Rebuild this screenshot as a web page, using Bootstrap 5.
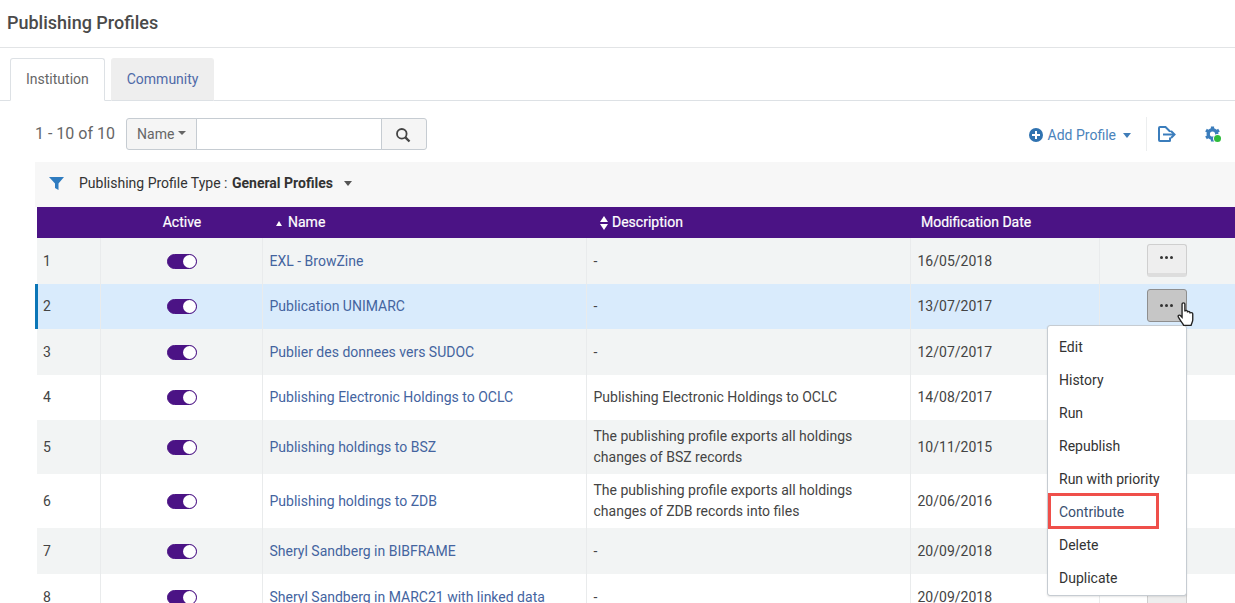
<!DOCTYPE html>
<html lang="en">
<head>
    <meta charset="UTF-8">
    <meta name="viewport" content="width=device-width, initial-scale=1.0">
    <title>Publishing Profiles</title>
    <link href="https://cdn.jsdelivr.net/npm/bootstrap@5.3.0/dist/css/bootstrap.min.css" rel="stylesheet">
    <style>
        html, body { height: 603px; overflow: hidden; }
        body { font-family: Roboto, "Liberation Sans", sans-serif; font-size: 14px; color: #3a3a3a; background: #fff; }
        a { text-decoration: none; color: #44649f; }
        .page-head { height: 48px; padding: 0 7px; border-bottom: 1px solid #e2e4e6; font-size: 18px; font-weight: 500; color: #4a4a4a; line-height: 46px; }
        .profile-tabs { padding: 10px 0 0 10px; height: 53px; border-bottom: 1px solid #dde1e5; gap: 6px; }
        .profile-tabs .nav-link { height: 43px; padding: 0 15px; line-height: 41px; font-size: 14px; border-radius: 3px 3px 0 0; margin-bottom: -1px; }
        .profile-tabs .nav-link.active { color: #666; border-color: #dde1e5 #dde1e5 #fff; }
        .profile-tabs .nav-link.other { background: #eeeeee; color: #4f6aa8; border-color: #eeeeee; border-bottom-color: #dde1e5; }
        .tool-row { height: 61px; padding: 17px 0 12px 35px; }
        .range-text { font-size: 16px; color: #666; width: 91px; }
        .search-group { width: 301px; height: 32px; }
        .search-group .btn, .search-group .form-control { height: 32px; border-color: #c6ccd2; font-size: 14px; border-radius: 3px; }
        .search-group .btn { background: #f5f5f5; color: #666; }
        .name-btn { width: 71px; padding: 0; }
        .search-btn { width: 46px; padding: 0 2px 0 0; }
        .add-link { color: #4a83bb; font-size: 14px; display: flex; align-items: center; gap: 5px; margin-top: 2px; }
        .tool-caret { width: 0; height: 0; border-left: 4.5px solid transparent; border-right: 4.5px solid transparent; border-top: 5px solid #3f7cb8; margin-left: 2px; }
        .tool-sep { width: 1px; height: 34px; background: #eceeef; margin: 0 11px 0 15px; }
        .gear-icon { margin-left: 29px; margin-right: 14px; }
        .filter-bar { margin-left: 35px; height: 45px; background: #f7f7f7; padding: 0 0 3px 14px; gap: 14px; color: #333; }
        .filter-label b { margin-left: 1px; }
        .filter-caret { width: 0; height: 0; border-left: 4.5px solid transparent; border-right: 4.5px solid transparent; border-top: 5px solid #555; margin-left: -3px; }
        .table-wrap { margin-left: 37px; position: relative; }
        .profile-table { table-layout: fixed; width: 1198px; margin: 0; color: #444; border-collapse: collapse; }
        .profile-table th { background: #4b1385; color: #fff; height: 31px; padding: 0 0 0 6px; border: 0; font-weight: 400; font-size: 14px; vertical-align: middle; -webkit-text-stroke: .2px #fff; }
        .profile-table td { padding: 0 7px 0 6px; border: 0; border-left: 1px solid #e9ebec; vertical-align: middle; line-height: 21px; background: #fff; box-shadow: none; color: #444; }
        .profile-table td:first-child { border-left: 0; }
        .profile-table tr.stripe td { background: #f2f4f4; }
        .profile-table tr.picked td { background: #d9ebfc; }
        .profile-table tr.picked td:first-child { position: relative; }
        .profile-table tr.picked td:first-child::before { content: ""; position: absolute; left: -2px; top: 0; bottom: 0; width: 3px; background: #0b76b7; }
        .profile-table .link-cell, .profile-table .desc-cell, .profile-table .date-cell { padding-left: 7px; }
        .profile-table .action-cell { padding-bottom: 2px; }
        .active-head { padding-right: 4px !important; }
        .date-head { padding-left: 11px !important; }
        .toggle-pill { display: block; width: 30px; height: 15px; margin: 0 0 0 60px; border-radius: 8px; background: #4b1385; border: 1px solid #4b1385; position: relative; }
        .toggle-pill::after { content: ""; position: absolute; right: 0; top: 0; width: 13px; height: 13px; border-radius: 50%; background: #fff; }
        .sort-up { display: inline-block; width: 0; height: 0; border-left: 3.5px solid transparent; border-right: 3.5px solid transparent; border-bottom: 5px solid #fff; margin: 0 6px 1px 8px; }
        .sort-both { display: inline-flex; flex-direction: column; gap: 2px; vertical-align: middle; margin: 0 4px 0 8px; }
        .sort-both i { display: block; width: 0; height: 0; border-left: 4px solid transparent; border-right: 4px solid transparent; }
        .sort-both i:first-child { border-bottom: 6px solid #fff; }
        .sort-both i:last-child { border-top: 6px solid #fff; }
        .dots-btn { display: flex; align-items: center; justify-content: center; gap: 2px; width: 40px; height: 33px; margin-left: 41px; padding: 0 0 3px; background: #eeeeee; border: 1px solid #cfcfcf; border-bottom: 4px solid #dddddd; border-radius: 3px; }
        .dots-btn i { width: 3px; height: 3px; border-radius: 50%; background: #333; }
        .dots-btn.pressed { background: #c6c6c6; border: 1px solid #8e8e8e; padding: 0; }
        .row-menu { display: block; position: absolute; left: 1010px; top: 118px; width: 140px; min-width: 0; padding: 0; margin: 0; border: 1px solid #c6ccd2; border-radius: 3px; font-size: 14px; box-shadow: 0 1px 2px rgba(0,0,0,.1); z-index: 5; }
        .row-menu .dropdown-item { height: 33px; line-height: 33px; padding: 0 11px; color: #333; }
        .row-menu .dropdown-item:first-child { margin-top: 5px; }
        .row-menu .contribute-item { position: relative; color: #3a5070; }
        .row-menu .contribute-item::after { content: ""; position: absolute; left: 0; top: -3px; width: 111px; height: 36px; border: 3px solid #ef4f4a; }
        .hand-cursor { position: absolute; left: 1140px; top: 95px; z-index: 6; }
    </style>
</head>
<body>
    <div class="page-head">Publishing Profiles</div>

    <ul class="nav nav-tabs profile-tabs">
        <li class="nav-item"><a class="nav-link active" href="#">Institution</a></li>
        <li class="nav-item"><a class="nav-link other" href="#">Community</a></li>
    </ul>

    <div class="tool-row d-flex align-items-center">
        <div class="range-text">1 - 10 of 10</div>
        <div class="input-group search-group flex-nowrap">
            <button class="btn name-btn dropdown-toggle" type="button">Name</button>
            <input class="form-control" type="text">
            <button class="btn search-btn" type="button" aria-label="Search">
                <svg width="16" height="16" viewBox="0 0 16 16" fill="none" stroke="#444" stroke-width="1.8"><circle cx="6.8" cy="6.8" r="4.8"/><path d="M10.4 10.4 14.5 14.5" stroke-width="2.4"/></svg>
            </button>
        </div>
        <div class="ms-auto d-flex align-items-center">
            <a class="add-link" href="#">
                <svg width="14" height="14" viewBox="0 0 14 14"><circle cx="7" cy="7" r="7" fill="#2f72b0"/><path d="M7 3v8M3 7h8" stroke="#fff" stroke-width="2"/></svg>
                Add Profile<span class="tool-caret"></span>
            </a>
            <span class="tool-sep"></span>
            <svg width="18" height="16" viewBox="0 0 18 16" fill="none" stroke="#3b7dbc" stroke-width="2"><path d="M12 11.500V14.500a.500.500 0 0 1-.500.500H2a1 1 0 0 1-1-1V2a1 1 0 0 1 1-1h5.500L12 5.500V6"/><path d="M5 8.500h11"/><path d="M13 5 16.500 8.500 13 12"/></svg>
            <svg class="gear-icon" width="16" height="17" viewBox="0 0 16 17">
                <circle cx="7.500" cy="8" r="4.300" fill="none" stroke="#3b7dbc" stroke-width="3.400"/>
                <path d="M7.500 .500v3M7.500 12.500v3M1 4.200 4 6M11 10l3 1.800M1 11.800 4 10M11 6l3-1.800" stroke="#3b7dbc" stroke-width="3.200"/>
                <circle cx="12.500" cy="12.500" r="4.500" fill="#fff"/>
                <circle cx="12.500" cy="12.500" r="3.500" fill="#2fbb3c"/>
            </svg>
        </div>
    </div>

    <div class="filter-bar d-flex align-items-center">
        <svg width="16" height="13" viewBox="0 0 16 13"><path fill="#2f7cc0" d="M0 0h15L9.500 6.500V13L6 11V6.500z"/></svg>
        <span class="filter-label">Publishing Profile Type : <b class="fw-bold">General Profiles</b></span>
        <span class="filter-caret"></span>
    </div>

    <div class="table-wrap">
        <table class="table profile-table">
            <colgroup>
                <col style="width:63px"><col style="width:162px"><col style="width:324px"><col style="width:324px"><col style="width:189px"><col style="width:136px">
            </colgroup>
            <thead>
                <tr><th></th><th class="text-center active-head">Active</th><th><span class="sort-up"></span>Name</th><th><span class="sort-both"><i></i><i></i></span>Description</th><th class="date-head">Modification Date</th><th></th></tr>
            </thead>
            <tbody id="profileRows"></tbody>
        </table>

        <div class="dropdown-menu row-menu">
            <a class="dropdown-item" href="#">Edit</a>
            <a class="dropdown-item" href="#">History</a>
            <a class="dropdown-item" href="#">Run</a>
            <a class="dropdown-item" href="#">Republish</a>
            <a class="dropdown-item" href="#">Run with priority</a>
            <a class="dropdown-item contribute-item" href="#">Contribute</a>
            <a class="dropdown-item" href="#">Delete</a>
            <a class="dropdown-item" href="#">Duplicate</a>
        </div>

        <svg class="hand-cursor" width="18" height="25" viewBox="0 0 16 24" preserveAspectRatio="none"><path fill="#fff" stroke="#222" stroke-width="1.200" d="M4.500 2c0-1.600 2.500-1.600 2.500 0v7c0-1.300 2.300-1.300 2.300 0v1c0-1.300 2.200-1.300 2.200 0v1c0-1.200 2.500-1.200 2.500 .3V17c0 2-1 3-1.500 5.500H6C5 20 2.500 17.500 1.200 14.500c-.7-1.700 1-2.500 2-1.300l1.300 1.500z"/></svg>
    </div>

    <script>
        // Table rows, with the height each one has in the picture
        const profiles = [
            ['EXL - BrowZine', '-', '16/05/2018', 46],
            ['Publication UNIMARC', '-', '13/07/2017', 45],
            ['Publier des donnees vers SUDOC', '-', '12/07/2017', 46],
            ['Publishing Electronic Holdings to OCLC', 'Publishing Electronic Holdings to OCLC', '14/08/2017', 45],
            ['Publishing holdings to BSZ', 'The publishing profile exports all holdings<br>changes of BSZ records', '10/11/2015', 54],
            ['Publishing holdings to ZDB', 'The publishing profile exports all holdings<br>changes of ZDB records into files', '20/06/2016', 54],
            ['Sheryl Sandberg in BIBFRAME', '-', '20/09/2018', 46],
            ['Sheryl Sandberg in MARC21 with linked data', '-', '20/09/2018', 46]
        ];

        const tbody = document.getElementById('profileRows');
        profiles.forEach((p, i) => {
            const tr = document.createElement('tr');
            if (i === 1) tr.className = 'picked';
            else if (i % 2 === 0) tr.className = 'stripe';
            tr.style.height = p[3] + 'px';
            tr.innerHTML = `
                <td>${i + 1}</td>
                <td><span class="toggle-pill"></span></td>
                <td class="link-cell"><a href="#">${p[0]}</a></td>
                <td class="desc-cell">${p[1]}</td>
                <td class="date-cell">${p[2]}</td>
                <td class="action-cell"><div class="dots-btn ${i === 1 ? 'pressed' : ''}"><i></i><i></i><i></i></div></td>`;
            tbody.appendChild(tr);
        });
    </script>
    <script src="https://cdn.jsdelivr.net/npm/bootstrap@5.3.0/dist/js/bootstrap.bundle.min.js"></script>
</body>
</html>
